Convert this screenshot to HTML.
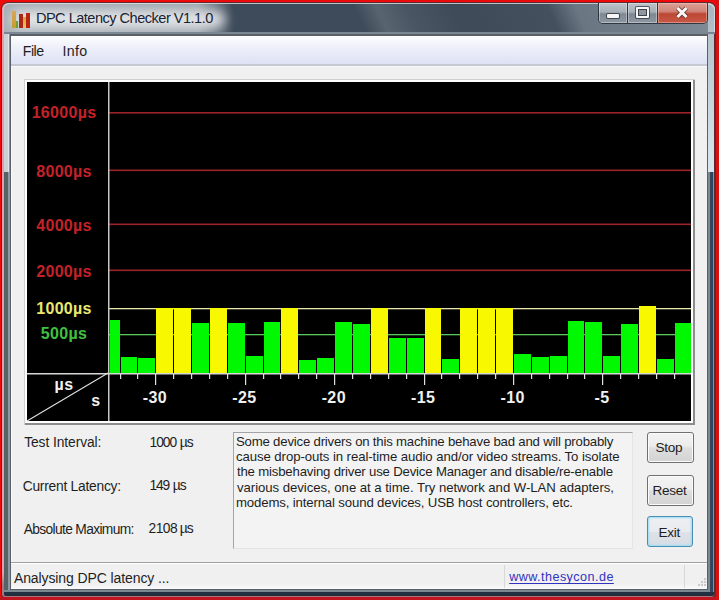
<!DOCTYPE html>
<html><head><meta charset="utf-8"><style>
html,body{margin:0;padding:0;width:719px;height:600px;overflow:hidden;background:#ee0a0a;font-family:"Liberation Sans",sans-serif;}
.a{position:absolute;}
.t{position:absolute;white-space:nowrap;}
</style></head><body>
<div class="a" style="left:1px;top:2px;width:715px;height:596px;border-radius:7px 7px 4px 4px;background:#5e2a30;"></div>
<div class="a" style="left:0;top:597px;width:719px;height:3px;background:#c0141e;"></div>
<div class="a" style="left:716px;top:0;width:3px;height:600px;background:#d81010;"></div>
<div class="a" style="left:2px;top:3px;width:712px;height:594px;border-radius:6px 6px 3px 3px;background:linear-gradient(#e4a0a8 96%,#a87880 98%);"></div>
<div class="a" style="left:4px;top:4px;width:710px;height:592px;border-radius:5px 5px 2px 2px;background:#586068;"></div>
<div class="a" style="left:4px;top:30px;width:4px;height:142px;background:#cdd0d5;"></div>
<div class="a" style="left:8px;top:30px;width:1px;height:142px;background:#e0e5ea;"></div>
<div class="a" style="left:9px;top:30px;width:1px;height:142px;background:#8a929c;"></div>
<div class="a" style="left:8px;top:172px;width:2px;height:418px;background:#9098a4;"></div>
<div class="a" style="left:4px;top:590px;width:710px;height:2px;background:#7a8890;"></div>
<div class="a" style="left:4px;top:592px;width:710px;height:4px;background:linear-gradient(#203040 0,#203040 3px,#282838 3px);border-radius:0 0 2px 2px;"></div>
<div class="a" style="left:708px;top:30px;width:6px;height:142px;background:linear-gradient(#b4c2cc,#d8e6ee);"></div>
<div class="a" style="left:708px;top:172px;width:6px;height:420px;background:linear-gradient(90deg,#7c8694 0,#7c8694 2px,#384858 2px,#384858 3px,#224a66 3px,#224a66 5px,#7898b0 5px);"></div>
<div class="a" style="left:3px;top:3px;width:712px;height:31px;border-radius:6px 6px 0 0;overflow:hidden;background:linear-gradient(90deg,#a8afb6 0px,#9ca4ac 195px,rgba(150,158,166,0) 230px),linear-gradient(65deg,#3e4b5a 0px,#3e4b5a 330px,#58646f 350px,#4a5664 375px,#3e4a58 420px,#44505e 505px,#6a7682 530px,#74808b 600px,#8a96a0 690px,#b4c2cc 712px);box-shadow:inset 0 1px 0 rgba(230,232,238,0.75), inset 1px 0 0 rgba(230,200,205,0.6);">
 <div class="a" style="left:8px;top:8px;width:214px;height:17px;border-radius:9px;background:rgba(236,238,240,0.92);filter:blur(6px);"></div>
</div>
<div class="a" style="left:4px;top:32px;width:710px;height:2px;background:#7c8592;"></div>
<div class="a" style="left:708px;top:4px;width:7px;height:28px;border-radius:0 5px 0 0;background:linear-gradient(#a8b4be,#b4c0ca);box-shadow:inset -1px 1px 0 rgba(230,236,240,0.6);"></div>
<div class="a" style="left:10px;top:34px;width:698px;height:556px;background:#5a6068;border-radius:2px 2px 0 0;"></div>
<div class="a" style="left:11px;top:36px;width:696px;height:553px;background:#f0f0f0;box-shadow:inset 1px 0 0 #f8fafc;"></div>
<div class="a" style="left:11px;top:36px;width:696px;height:28px;background:linear-gradient(#fefefe 0%,#eef0fa 40%,#dde1f4 100%);border-bottom:2px solid #c6c8d4;box-shadow:0 1px 0 #f8f8fa;"></div>
<div class="t" style="left:22.70px;top:43.73px;font-size:14.2px;letter-spacing:-0.467px;line-height:1;color:#1e1e1e;">File</div>
<div class="t" style="left:62.40px;top:43.73px;font-size:14.2px;letter-spacing:0.4px;line-height:1;color:#1e1e1e;">Info</div>
<div class="a" style="left:24px;top:79px;width:671px;height:346px;background:#ffffff;box-shadow:inset 1px 1px 0 #d0d0d0, inset -2px -2px 0 #8c8c8c;"></div>
<div class="a" style="left:27px;top:82px;width:664px;height:339px;background:#000;"></div>
<svg class="a" style="left:0;top:0" width="719" height="600">
<rect x="109" y="112" width="582" height="1.6" fill="#9a242a"/><rect x="109" y="169.5" width="582" height="1.6" fill="#9a242a"/><rect x="109" y="223.5" width="582" height="1.6" fill="#9a242a"/><rect x="109" y="269.5" width="582" height="1.6" fill="#9a242a"/><rect x="109" y="308" width="582" height="1.3" fill="#e6e6a8"/><rect x="109" y="334" width="582" height="1.3" fill="#5ac85a"/><rect x="110" y="320" width="10" height="53" fill="#00f800"/><rect x="121" y="357" width="16" height="16" fill="#00f800"/><rect x="138" y="358" width="17" height="15" fill="#00f800"/><rect x="156" y="308" width="17" height="65" fill="#f8f800"/><rect x="174" y="308" width="17" height="65" fill="#f8f800"/><rect x="192" y="323" width="17" height="50" fill="#00f800"/><rect x="210" y="308" width="17" height="65" fill="#f8f800"/><rect x="228" y="323" width="17" height="50" fill="#00f800"/><rect x="246" y="356" width="17" height="17" fill="#00f800"/><rect x="264" y="322" width="16" height="51" fill="#00f800"/><rect x="281" y="308" width="17" height="65" fill="#f8f800"/><rect x="299" y="360" width="17" height="13" fill="#00f800"/><rect x="317" y="358" width="17" height="15" fill="#00f800"/><rect x="335" y="322" width="17" height="51" fill="#00f800"/><rect x="353" y="324" width="17" height="49" fill="#00f800"/><rect x="371" y="308" width="17" height="65" fill="#f8f800"/><rect x="389" y="338" width="17" height="35" fill="#00f800"/><rect x="407" y="338" width="17" height="35" fill="#00f800"/><rect x="425" y="308" width="16" height="65" fill="#f8f800"/><rect x="442" y="359" width="17" height="14" fill="#00f800"/><rect x="460" y="308" width="17" height="65" fill="#f8f800"/><rect x="478" y="308" width="17" height="65" fill="#f8f800"/><rect x="496" y="308" width="17" height="65" fill="#f8f800"/><rect x="514" y="354" width="17" height="19" fill="#00f800"/><rect x="532" y="357" width="17" height="16" fill="#00f800"/><rect x="550" y="356" width="17" height="17" fill="#00f800"/><rect x="568" y="321" width="16" height="52" fill="#00f800"/><rect x="585" y="322" width="17" height="51" fill="#00f800"/><rect x="603" y="356" width="17" height="17" fill="#00f800"/><rect x="621" y="324" width="17" height="49" fill="#00f800"/><rect x="639" y="306" width="17" height="67" fill="#f8f800"/><rect x="657" y="359" width="17" height="14" fill="#00f800"/><rect x="675" y="323" width="16" height="50" fill="#00f800"/>
<rect x="108" y="82" width="1.5" height="339" fill="#c8c8c8"/>
<rect x="27" y="373" width="664" height="1.5" fill="#d8d8d8"/>
<rect x="674" y="374" width="1.2" height="5" fill="#e0e0e0"/><rect x="656" y="374" width="1.2" height="5" fill="#e0e0e0"/><rect x="638" y="374" width="1.2" height="5" fill="#e0e0e0"/><rect x="620" y="374" width="1.2" height="5" fill="#e0e0e0"/><rect x="602" y="374" width="1.2" height="11" fill="#e0e0e0"/><rect x="584" y="374" width="1.2" height="5" fill="#e0e0e0"/><rect x="567" y="374" width="1.2" height="5" fill="#e0e0e0"/><rect x="549" y="374" width="1.2" height="5" fill="#e0e0e0"/><rect x="531" y="374" width="1.2" height="5" fill="#e0e0e0"/><rect x="513" y="374" width="1.2" height="11" fill="#e0e0e0"/><rect x="495" y="374" width="1.2" height="5" fill="#e0e0e0"/><rect x="477" y="374" width="1.2" height="5" fill="#e0e0e0"/><rect x="459" y="374" width="1.2" height="5" fill="#e0e0e0"/><rect x="441" y="374" width="1.2" height="5" fill="#e0e0e0"/><rect x="424" y="374" width="1.2" height="11" fill="#e0e0e0"/><rect x="406" y="374" width="1.2" height="5" fill="#e0e0e0"/><rect x="388" y="374" width="1.2" height="5" fill="#e0e0e0"/><rect x="370" y="374" width="1.2" height="5" fill="#e0e0e0"/><rect x="352" y="374" width="1.2" height="5" fill="#e0e0e0"/><rect x="334" y="374" width="1.2" height="11" fill="#e0e0e0"/><rect x="316" y="374" width="1.2" height="5" fill="#e0e0e0"/><rect x="298" y="374" width="1.2" height="5" fill="#e0e0e0"/><rect x="280" y="374" width="1.2" height="5" fill="#e0e0e0"/><rect x="263" y="374" width="1.2" height="5" fill="#e0e0e0"/><rect x="245" y="374" width="1.2" height="11" fill="#e0e0e0"/><rect x="227" y="374" width="1.2" height="5" fill="#e0e0e0"/><rect x="209" y="374" width="1.2" height="5" fill="#e0e0e0"/><rect x="191" y="374" width="1.2" height="5" fill="#e0e0e0"/><rect x="173" y="374" width="1.2" height="5" fill="#e0e0e0"/><rect x="155" y="374" width="1.2" height="11" fill="#e0e0e0"/><rect x="137" y="374" width="1.2" height="5" fill="#e0e0e0"/><rect x="120" y="374" width="1.2" height="5" fill="#e0e0e0"/>
<line x1="27" y1="421" x2="108" y2="373" stroke="#e0e0e0" stroke-width="1.2"/>
<g font-family="Liberation Sans" font-weight="bold" font-size="16" fill="#f0f0f0" letter-spacing="0.4"><text x="155.0" y="403" text-anchor="middle">-30</text><text x="244.4" y="403" text-anchor="middle">-25</text><text x="333.8" y="403" text-anchor="middle">-20</text><text x="423.2" y="403" text-anchor="middle">-15</text><text x="512.6" y="403" text-anchor="middle">-10</text><text x="602.0" y="403" text-anchor="middle">-5</text>
<text x="64" y="390" text-anchor="middle">µs</text>
<text x="96" y="406" text-anchor="middle">s</text>
</g>
<g font-family="Liberation Sans" font-weight="bold" font-size="16" text-anchor="middle" letter-spacing="0.3">
<text x="64" y="118" fill="#c42228">16000µs</text>
<text x="64" y="176.5" fill="#c42228">8000µs</text>
<text x="64" y="230.5" fill="#c42228">4000µs</text>
<text x="64" y="276.5" fill="#c42228">2000µs</text>
<text x="64" y="313.6" fill="#e8e870">1000µs</text>
<text x="64" y="339.4" fill="#40c040">500µs</text>
</g>
</svg>
<div class="a" style="left:11px;top:9px;width:20px;height:20px;">
 <div class="a" style="left:1px;top:2px;width:4px;height:17px;background:linear-gradient(#d8a858,#d0a040 60%,#c0a030);"></div>
 <div class="a" style="left:5px;top:12px;width:2px;height:7px;background:#70a030;"></div>
 <div class="a" style="left:8px;top:5px;width:4px;height:14px;background:#a82818;"></div>
 <div class="a" style="left:12px;top:8px;width:3px;height:11px;background:linear-gradient(#e0a040,#f0c060);"></div>
 <div class="a" style="left:15px;top:4px;width:4px;height:15px;background:#b82412;"></div>
</div>
<div class="t" style="left:35.90px;top:11.49px;font-size:14.6px;letter-spacing:-0.528px;line-height:1;color:#1a2230;">DPC Latency Checker V1.1.0</div>
<div class="a" style="left:598px;top:3px;width:108px;height:20px;border-radius:0 0 5px 5px;border:1px solid rgba(40,48,58,0.9);border-top:none;overflow:hidden;">
 <div class="a" style="left:0;top:0;width:28px;height:20px;background:linear-gradient(#bcc3ca,#a6aeb6 45%,#7e8892 55%,#8e98a2);box-shadow:inset 0 0 0 1px rgba(255,255,255,0.35);"></div>
 <div class="a" style="left:28px;top:0;width:1px;height:20px;background:rgba(40,48,58,0.9);"></div>
 <div class="a" style="left:29px;top:0;width:29px;height:20px;background:linear-gradient(#bcc3ca,#a6aeb6 45%,#7e8892 55%,#8e98a2);box-shadow:inset 0 0 0 1px rgba(255,255,255,0.35);"></div>
 <div class="a" style="left:58px;top:0;width:1px;height:20px;background:rgba(40,48,58,0.9);"></div>
 <div class="a" style="left:59px;top:0;width:49px;height:20px;background:linear-gradient(#dca096,#d08478 42%,#bc4632 55%,#c85a48);box-shadow:inset 0 0 0 1px rgba(255,215,205,0.4);"></div>
 <div class="a" style="left:8px;top:11px;width:12px;height:4px;background:#f6f6f6;border-radius:1px;box-shadow:0 0 0 1px rgba(40,44,52,0.7);"></div>
 <div class="a" style="left:37px;top:4px;width:9px;height:7px;border:2px solid #f6f6f6;border-top-width:2px;border-radius:1px;box-shadow:0 0 0 1px rgba(40,44,52,0.7), inset 0 0 0 1px rgba(40,44,52,0.8);background:#8e969e;"></div>
 <svg class="a" style="left:76px;top:3px" width="14" height="13"><path d="M2.5 2 L11.5 11 M11.5 2 L2.5 11" stroke="rgba(60,30,28,0.6)" stroke-width="4.6"/><path d="M2.5 2 L11.5 11 M11.5 2 L2.5 11" stroke="#f8f8f8" stroke-width="3"/></svg>
</div>
<div class="t" style="left:24.20px;top:436.37px;font-size:13.8px;letter-spacing:-0.077px;line-height:1;color:#1e1e1e;">Test Interval:</div>
<div class="t" style="left:149.40px;top:436.47px;font-size:13.8px;letter-spacing:-0.933px;line-height:1;color:#1e1e1e;">1000</div><div class="t" style="left:179.70px;top:436.47px;font-size:13.8px;letter-spacing:-1.0px;line-height:1;color:#1e1e1e;">µs</div>
<div class="t" style="left:22.70px;top:479.67px;font-size:13.8px;letter-spacing:-0.24px;line-height:1;color:#1e1e1e;">Current Latency:</div>
<div class="t" style="left:149.40px;top:479.27px;font-size:13.8px;letter-spacing:-1.1px;line-height:1;color:#1e1e1e;">149</div><div class="t" style="left:172.75px;top:479.27px;font-size:13.8px;letter-spacing:-1.0px;line-height:1;color:#1e1e1e;">µs</div>
<div class="t" style="left:23.80px;top:522.67px;font-size:13.8px;letter-spacing:-0.662px;line-height:1;color:#1e1e1e;">Absolute Maximum:</div>
<div class="t" style="left:148.60px;top:522.37px;font-size:13.8px;letter-spacing:-0.533px;line-height:1;color:#1e1e1e;">2108</div><div class="t" style="left:179.70px;top:522.37px;font-size:13.8px;letter-spacing:-1.0px;line-height:1;color:#1e1e1e;">µs</div>
<div class="a" style="left:233px;top:432px;width:398px;height:115px;background:#f3f3f3;border:1px solid #a4a4a4;border-right-color:#e4e4e4;border-bottom-color:#e4e4e4;"></div>
<div class="t" style="left:236.00px;top:434.88px;font-size:13.2px;letter-spacing:-0.2px;line-height:1;color:#1e1e1e;">Some device drivers on this machine behave bad and will probably</div>
<div class="t" style="left:236.00px;top:450.18px;font-size:13.2px;letter-spacing:-0.082px;line-height:1;color:#1e1e1e;">cause drop-outs in real-time audio and/or video streams. To isolate</div>
<div class="t" style="left:237.00px;top:465.38px;font-size:13.2px;letter-spacing:-0.187px;line-height:1;color:#1e1e1e;">the misbehaving driver use Device Manager and disable/re-enable</div>
<div class="t" style="left:237.00px;top:480.58px;font-size:13.2px;letter-spacing:-0.052px;line-height:1;color:#1e1e1e;">various devices, one at a time. Try network and W-LAN adapters,</div>
<div class="t" style="left:236.00px;top:495.88px;font-size:13.2px;letter-spacing:-0.144px;line-height:1;color:#1e1e1e;">modems, internal sound devices, USB host controllers, etc.</div>
<div class="a" style="left:647px;top:432px;width:45px;height:29px;border:1px solid #707070;border-radius:3px;background:linear-gradient(#f3f3f3 0%,#ececec 45%,#dedede 52%,#d3d3d3 100%);box-shadow:inset 0 0 0 1px #fbfbfb;"></div>
<div class="t" style="left:655.60px;top:440.94px;font-size:13.6px;letter-spacing:-0.333px;line-height:1;color:#1e1e1e;">Stop</div>
<div class="a" style="left:647px;top:475px;width:45px;height:29px;border:1px solid #707070;border-radius:3px;background:linear-gradient(#f3f3f3 0%,#ececec 45%,#dedede 52%,#d3d3d3 100%);box-shadow:inset 0 0 0 1px #fbfbfb;"></div>
<div class="t" style="left:652.60px;top:484.14px;font-size:13.6px;letter-spacing:-0.333px;line-height:1;color:#1e1e1e;">Reset</div>
<div class="a" style="left:647px;top:516px;width:44px;height:29px;border:1.5px solid #4a8eb2;border-radius:3px;background:linear-gradient(#eef0f4 0%,#e8eaee 50%,#dfe2e8 52%,#d8dce4 100%);box-shadow:inset 0 0 2px 1px #9adcf4;"></div>
<div class="t" style="left:658.60px;top:525.74px;font-size:13.6px;letter-spacing:-0.333px;line-height:1;color:#1e1e1e;">Exit</div>
<div class="a" style="left:11px;top:562px;width:696px;height:26px;background:linear-gradient(#f0f0f0,#f0f0f0 80%,#fafafa);border-top:1px solid #a0a0a0;box-shadow:inset 0 1px 0 #ffffff;"></div>
<div class="a" style="left:504px;top:565px;width:1px;height:23px;background:#d8d8d8;"></div>
<div class="a" style="left:684px;top:565px;width:1px;height:23px;background:#d8d8d8;"></div>
<svg class="a" style="left:697px;top:577px" width="10" height="10">
<g fill="#cacaca"><rect x="7" y="1" width="2" height="2"/><rect x="4" y="4" width="2" height="2"/><rect x="7" y="4" width="2" height="2"/><rect x="1" y="7" width="2" height="2"/><rect x="4" y="7" width="2" height="2"/><rect x="7" y="7" width="2" height="2"/></g></svg>
<div class="t" style="left:13.90px;top:571.10px;font-size:14.0px;letter-spacing:-0.1px;line-height:1;color:#1e1e1e;">Analysing DPC latency ...</div>
<div class="t" style="left:509.20px;top:571.19px;font-size:12.6px;letter-spacing:0.443px;line-height:1;color:#3232c0;text-decoration:underline;text-underline-offset:2px;">www.thesycon.de</div>
</body></html>
